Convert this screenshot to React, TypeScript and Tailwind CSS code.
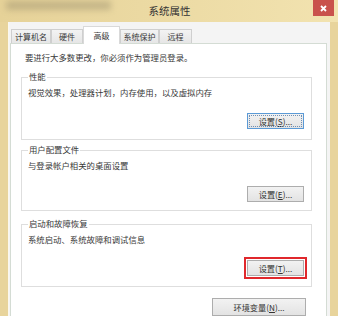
const Btn = ({
  label,
  hot,
  tail = "...",
  focused = false,
  className = "",
}: {
  label: string;
  hot: string;
  tail?: string;
  focused?: boolean;
  className?: string;
}) => (
  <button
    className={`flex items-center justify-center h-[16px] border bg-gradient-to-b from-[#f2f2f2] to-[#e3e3e3] text-[8.2px] leading-none text-[#333] ${
      focused ? "border-[#5b9ad6] outline-1 outline-dotted outline-[#6f8fb3] -outline-offset-[3px]" : "border-[#adadad]"
    } ${className}`}
  >
    {label}(<span className="underline">{hot}</span>){tail}
  </button>
);

const Group = ({
  title,
  text,
  className = "",
  children,
}: {
  title: string;
  text: string;
  className?: string;
  children: React.ReactNode;
}) => (
  <div className={`ml-[10px] mr-[14px] border border-[#dedede] pl-[6px] pr-[7px] flex flex-col ${className}`}>
    <div className="-mt-[8px] w-fit bg-white px-[1px] leading-[12px]">{title}</div>
    <div className="mt-[4px] leading-[12px]">{text}</div>
    <div className="mt-[15px] flex justify-end">{children}</div>
  </div>
);

export default function App() {
  const tabs = [
    { title: "计算机名", w: "w-[40px]" },
    { title: "硬件", w: "w-[32px]" },
    { title: "高级", w: "w-[37px]", active: true },
    { title: "系统保护", w: "w-[39px]" },
    { title: "远程", w: "w-[33px]" },
  ];

  return (
    <div className="w-[338px] h-[316px] overflow-hidden bg-[#e8d49c] flex flex-col font-['Noto_Sans_CJK_SC',sans-serif] text-[8.4px] text-[#383838]">
      {/* title bar */}
      <div className="relative h-[22px] shrink-0 flex items-center justify-center bg-gradient-to-r from-[#e6d298] to-[#f2e3b0]">
        <div className="absolute left-[6px] top-[1px] h-[9px] w-[105px] bg-[#8f8466] opacity-40 blur-[3px]" />
        <span className="text-[10.5px] text-[#333] pl-[1px]">系统属性</span>
        <div className="absolute right-[4px] top-0 w-[21px] h-[16px] bg-[#c9524c] flex items-center justify-center">
          <svg width="7" height="7" viewBox="0 0 7 7">
            <path d="M1 1L6 6M6 1L1 6" stroke="#fff" strokeWidth="1.8" />
          </svg>
        </div>
      </div>

      {/* dialog body */}
      <div className="flex-1 ml-[8px] mr-[8px] bg-[#f4f4f4] pt-[4px] flex flex-col border-l border-[#fbf8ee]">
        <div className="flex items-end h-[17px] pl-[2px] text-[8px]">
          {tabs.map((t) =>
            t.active ? (
              <div
                key={t.title}
                className={`${t.w} h-[18px] -mb-[1px] z-10 bg-white border border-b-0 border-[#d9d9d9] flex items-center justify-center`}
              >
                {t.title}
              </div>
            ) : (
              <div
                key={t.title}
                className={`${t.w} h-[14px] bg-gradient-to-b from-[#f3f3f3] to-[#e6e6e6] border border-b-0 border-[#cfcfcf] flex items-center justify-center`}
              >
                {t.title}
              </div>
            )
          )}
        </div>

        <div className="flex-1 ml-[1px] mr-[3px] bg-white border border-[#d4dcd4] flex flex-col">
          <div className="pt-[7px] pl-[14px] leading-[12px]">要进行大多数更改，你必须作为管理员登录。</div>

          <Group title="性能" text="视觉效果，处理器计划，内存使用，以及虚拟内存" className="mt-[14px] pb-[10px]">
            <Btn label="设置" hot="S" focused className="w-[57px]" />
          </Group>

          <Group title="用户配置文件" text="与登录帐户相关的桌面设置" className="mt-[10px] pb-[8px]">
            <Btn label="设置" hot="E" className="w-[57px]" />
          </Group>

          <Group title="启动和故障恢复" text="系统启动、系统故障和调试信息" className="mt-[13px] pb-[10px]">
            <div className="-m-[3px] border-2 border-[#e0282c] p-[1px]">
              <Btn label="设置" hot="T" className="w-[57px]" />
            </div>
          </Group>

          <div className="mt-[11px] mr-[20px] flex justify-end">
            <Btn label="环境变量" hot="N" className="w-[94px] h-[18px]" />
          </div>
        </div>
      </div>
    </div>
  );
}
